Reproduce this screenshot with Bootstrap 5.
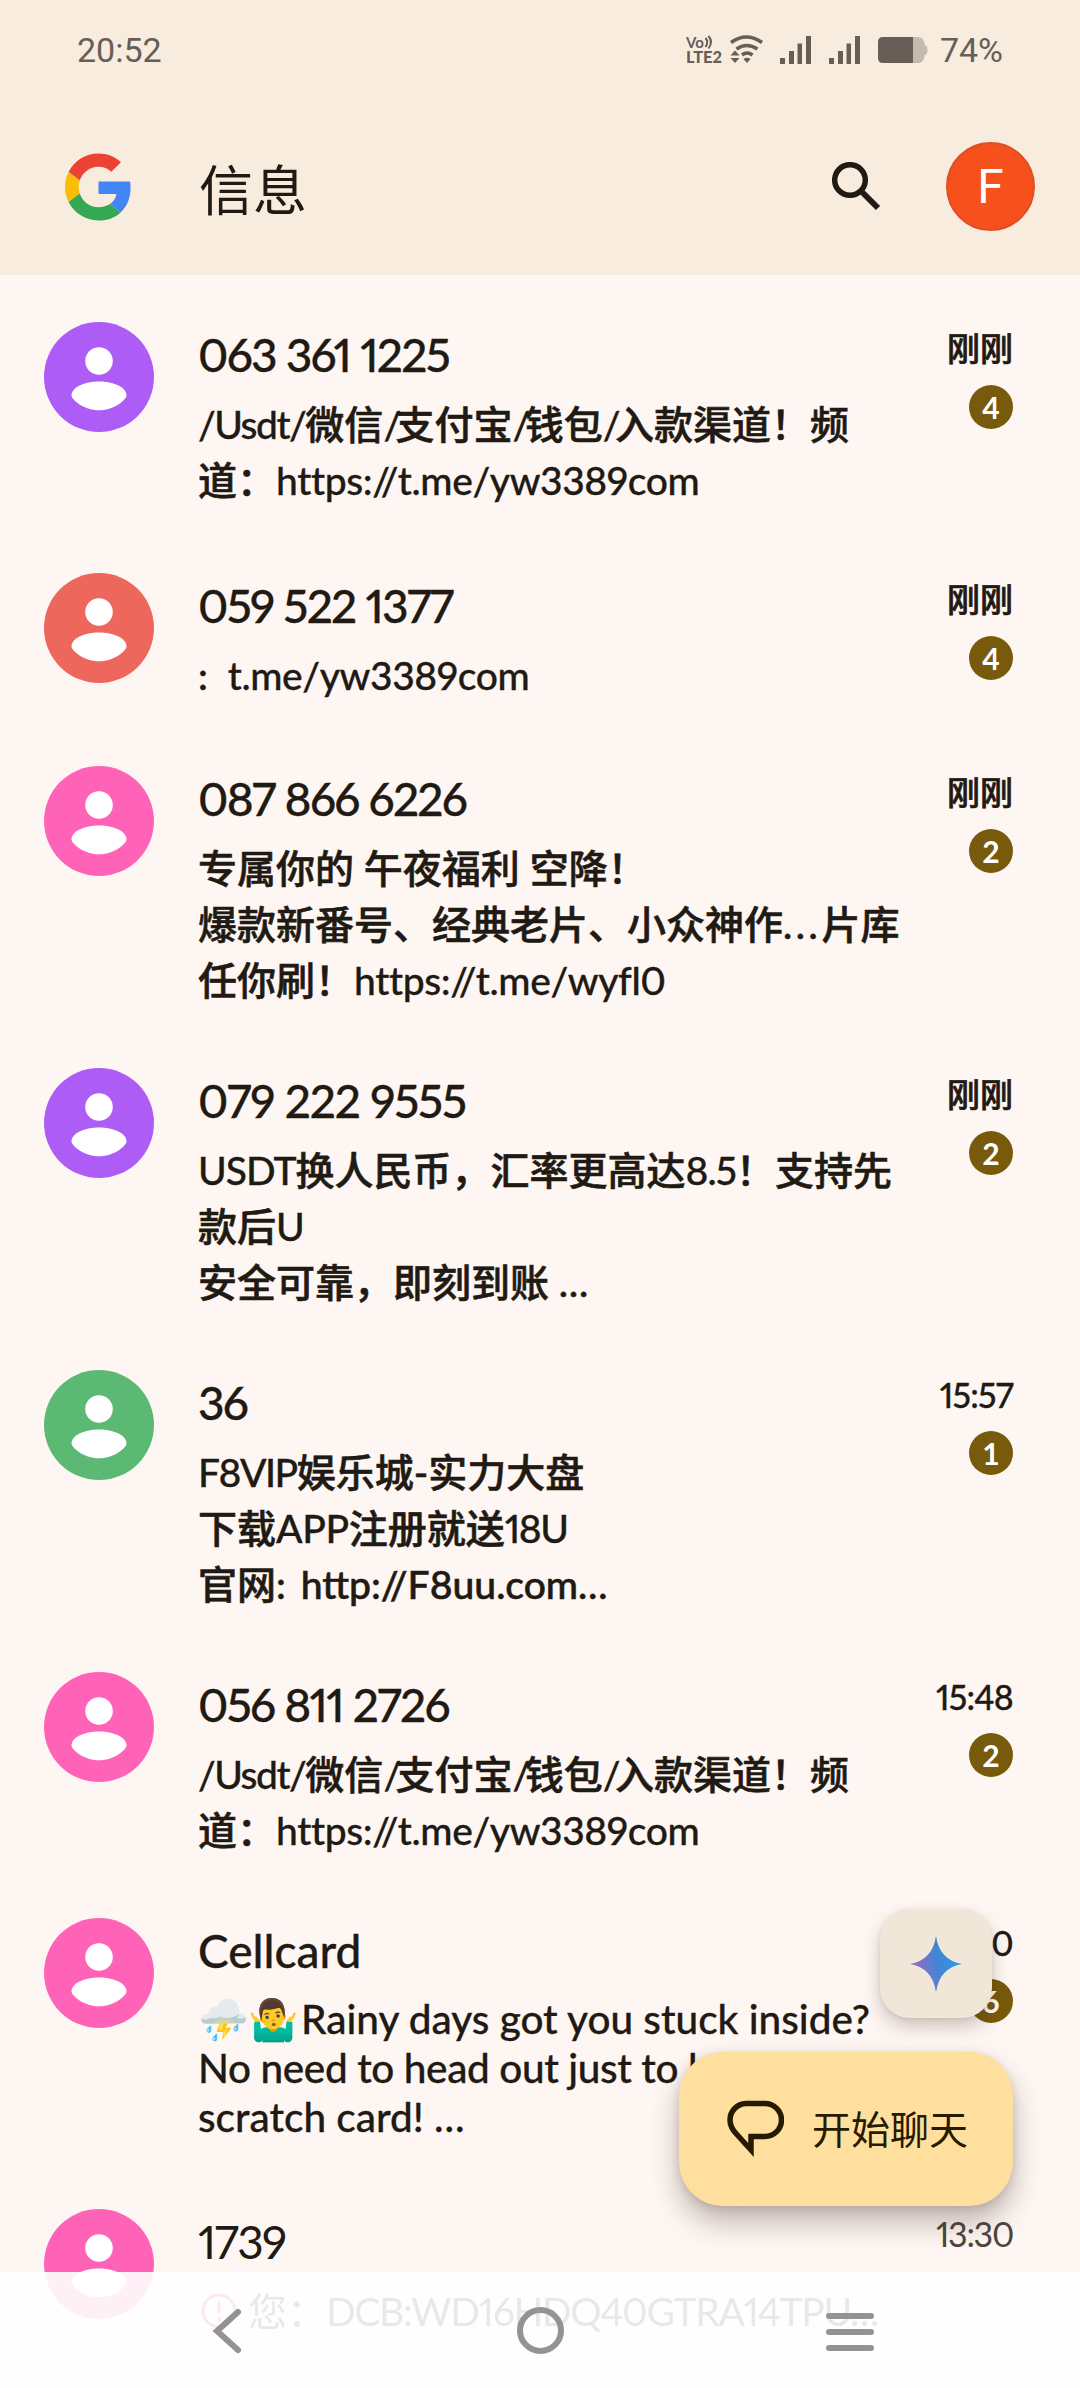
<!DOCTYPE html>
<html lang="zh-CN">
<head>
<meta charset="utf-8">
<meta name="viewport" content="width=device-width, initial-scale=1">
<title>信息</title>
<link href="https://cdn.jsdelivr.net/npm/bootstrap@5.3.0/dist/css/bootstrap.min.css" rel="stylesheet">
<style>
  body { background:#fef6f2; color:#1f1a13; font-family:Lato,"Noto Sans CJK SC",sans-serif; font-feature-settings:"pnum","kern"; }
  .phone { width:1080px; height:2388px; }
  .top-area { height:275px; background:#f8ecdf; }
  .status-bar { height:98px; padding:2px 77px 0; color:#665e57; font:34px/40px Roboto,sans-serif; }
  .signal-b { margin-left:18px; }
  .signal-a { margin-left:14px; }
  .battery { margin:0 12px 0 18px; }
  .app-bar { height:177px; padding:0 45px 0 65px; }
  .app-title { font-size:54px; line-height:70px; margin-left:67px; }
  .lens { margin-right:65px; }
  .account { width:89px; height:89px; background:#f6511d; border:2px solid #dd4f24; font:48px/48px Roboto,sans-serif; }
  .inbox { padding-top:47px; }
  .thread { padding:0 67px 0 44px; }
  .ava { flex:none; }
  .thread-text { margin-left:44px; white-space:nowrap; font-weight:500; -webkit-text-stroke:.6px currentColor; }
  .who { font-size:46px; line-height:66px; -webkit-text-stroke:.3px currentColor; }
  .snip { font-size:39px; line-height:56px; margin-top:8px; }
  .snip.latin { font-size:40.5px; line-height:49px; margin-top:10px; -webkit-text-stroke:.3px currentColor; }
  .when { font-size:34px; line-height:50px; font-weight:500; white-space:nowrap; letter-spacing:-.8px; -webkit-text-stroke:.3px currentColor; }
  .when.zh { font-size:33px; line-height:52px; letter-spacing:0; -webkit-text-stroke:.7px currentColor; }
  .unread { width:44px; height:44px; margin-top:11px; background:#775a0b; color:#fff; font:700 30px/44px Lato,sans-serif; text-align:center; }
  .h1l { height:193px; } .h2l { height:246px; } .h2x { height:251px; } .h3l { height:302px; } .h3e { height:291px; }
  .seen .thread-text, .seen .who, .seen .when { font-weight:400; -webkit-text-stroke:0; }
  .seen .when { color:#4c463e; letter-spacing:-1.3px; }
  /* tracking of the Latin runs */
  .num { letter-spacing:-1.72px; }
  .num-w { letter-spacing:-1.15px; }
  .run { letter-spacing:-.38px; -webkit-text-stroke:.3px currentColor; }
  .run-s { letter-spacing:-1.5px; -webkit-text-stroke:.3px currentColor; }
  .run-m { letter-spacing:-1px; -webkit-text-stroke:.3px currentColor; }
  .sl { letter-spacing:-5.6px; -webkit-text-stroke:.3px currentColor; }
  .dots { letter-spacing:3.6px; }
  .sp { letter-spacing:5px; }
  .code { letter-spacing:-1.31px; }
  .emo { margin-right:3px; -webkit-text-stroke:0; }
  .warn { margin:0 8px 0 2px; }
  .spark-fab { right:88px; top:1909px; width:112px; height:109px; border-radius:30px; background:#f0e7d9; box-shadow:0 9px 18px rgba(60,45,30,.24),0 1px 4px rgba(60,45,30,.1); }
  .chat-fab { right:67px; top:2052px; width:334px; height:154px; border-radius:44px; background:#ffdf9e; color:#261a00; font-size:39px; padding:0 45px 0 48px; box-shadow:0 16px 28px rgba(60,45,40,.32),0 2px 8px rgba(60,45,30,.15); }
  .nav-keys { left:0; right:0; bottom:0; height:116px; background:rgba(255,255,255,.9); }
</style>
<script src="https://cdn.jsdelivr.net/npm/bootstrap@5.3.0/dist/js/bootstrap.bundle.min.js"></script>
</head>
<body>
<svg class="d-none">
  <symbol id="person" viewBox="0 0 110 110"><circle cx="55" cy="55" r="55" fill="currentColor"/><circle cx="55" cy="39" r="13.8" fill="#fff"/><path d="M27.500 73.500C27.500 65 41 59.500 55 59.500S82.500 65 82.500 73.500C82.500 77 71 88.300 55 88.300S27.500 77 27.500 73.500Z" fill="#fff"/></symbol>
  <symbol id="bars" viewBox="0 0 31 28"><path d="M0 22h5v6H0zM9 15h5v13H9zM17.500 7.500h4.500V28h-4.500zM26 0h5v28h-5z" fill="#665e57"/></symbol>
</svg>
<div class="phone position-relative overflow-hidden">
  <header class="top-area">
    <div class="status-bar d-flex align-items-center">
      <span class="me-auto">20:52</span>
      <svg width="80" height="32" viewBox="0 0 80 32" fill="none" stroke="#665e57">
        <text x="0" y="14" font-family="Lato" font-size="15" font-weight="700" fill="#665e57" stroke="none">Vo</text>
        <path d="M19.500 4q3.500 4 0 9M22.500 2q5 6 0 12.500" stroke-width="2"/>
        <text x="0" y="29" font-family="Lato" font-size="16" font-weight="900" fill="#665e57" stroke="none" textLength="36" lengthAdjust="spacingAndGlyphs">LTE2</text>
        <path d="M45 8.500q15.500-11 31 0M50.500 15q10-7 21 0M56 21q5-4 10.500 0" stroke-width="3.600"/>
        <path d="M57.500 25q3.500-2.500 7 0L61 29zM44.500 21.500h9L49 16.500zM44.500 24h9L49 29z" fill="#665e57" stroke="none"/>
      </svg>
      <svg class="signal-a" width="31" height="28"><use href="#bars"/></svg>
      <svg class="signal-b" width="31" height="28"><use href="#bars"/></svg>
      <svg class="battery" width="50" height="26" viewBox="0 0 50 26"><path d="M35 0h5q5 0 6.500 6v2q3 0 3 5t-3 5v2q-1.500 6-6.500 6h-5z" fill="#c5bbac"/><path d="M5 0h30v26H5q-5 0-5-5V5q0-5 5-5z" fill="#665e57"/></svg>
      <span>74%</span>
    </div>
    <div class="app-bar d-flex align-items-center">
      <svg width="67" height="68" viewBox="0 0 48 48"><path fill="#ea4335" d="M24 9.500c3.540 0 6.710 1.220 9.210 3.600l6.850-6.850C35.900 2.380 30.470 0 24 0 14.620 0 6.510 5.380 2.560 13.220l7.980 6.190C12.430 13.720 17.740 9.500 24 9.500z"/><path fill="#4285f4" d="M46.980 24.550c0-1.570-.15-3.090-.38-4.550H24v9.020h12.940c-.58 2.960-2.260 5.480-4.780 7.180l7.730 6c4.510-4.180 7.090-10.360 7.090-17.650z"/><path fill="#fbbc05" d="M10.530 28.590A14.500 14.500 0 0 1 9.770 24c0-1.600.27-3.140.76-4.590l-7.980-6.190A23.900 23.900 0 0 0 0 24c0 3.880.92 7.540 2.560 10.780l7.970-6.190z"/><path fill="#34a853" d="M24 48c6.480 0 11.930-2.130 15.890-5.810l-7.730-6c-2.150 1.450-4.920 2.300-8.160 2.300-6.260 0-11.570-4.220-13.470-9.910l-7.980 6.190C6.510 42.620 14.620 48 24 48z"/></svg>
      <h1 class="app-title mb-0 fw-normal me-auto pt-2">信息</h1>
      <svg class="lens" width="49" height="49" viewBox="0 0 49 49" fill="none" stroke="#1f1a13"><circle cx="18" cy="18" r="15.300" stroke-width="5.500"/><path d="M29 29L46 46" stroke-width="6"/></svg>
      <div class="account rounded-circle text-white d-flex align-items-center justify-content-center">F</div>
    </div>
  </header>

  <main class="inbox">
    <article class="thread h2x d-flex align-items-start">
      <svg class="ava" width="110" height="110" color="#ae5cf6"><use href="#person"/></svg>
      <div class="thread-text me-auto"><div class="who num">063 361 1225</div>
      <div class="snip"><span class="run-s">/Usdt/</span>微信<span class="sl">/</span>支付宝<span class="sl">/</span>钱包<span class="sl">/</span>入款渠道！频<br>道：<span class="run">https://t.me/yw3389com</span></div></div>
      <div class="d-flex flex-column align-items-end"><div class="when zh">刚刚</div><div class="unread rounded-circle">4</div></div>
    </article>
    <article class="thread h1l d-flex align-items-start">
      <svg class="ava" width="110" height="110" color="#ee675c"><use href="#person"/></svg>
      <div class="thread-text me-auto"><div class="who num">059 522 1377</div>
      <div class="snip"><span class="sp">: </span><span class="run">t.me/yw3389com</span></div></div>
      <div class="d-flex flex-column align-items-end"><div class="when zh">刚刚</div><div class="unread rounded-circle">4</div></div>
    </article>
    <article class="thread h3l d-flex align-items-start">
      <svg class="ava" width="110" height="110" color="#ff63b8"><use href="#person"/></svg>
      <div class="thread-text me-auto"><div class="who num">087 866 6226</div>
      <div class="snip">专属你的 午夜福利 空降！<br>爆款新番号、经典老片、小众神作<span class="dots">...</span>片库<br>任你刷！<span class="run">https://t.me/wyfl0</span></div></div>
      <div class="d-flex flex-column align-items-end"><div class="when zh">刚刚</div><div class="unread rounded-circle">2</div></div>
    </article>
    <article class="thread h3l d-flex align-items-start">
      <svg class="ava" width="110" height="110" color="#ae5cf6"><use href="#person"/></svg>
      <div class="thread-text me-auto"><div class="who num-w">079 222 9555</div>
      <div class="snip"><span class="run-m">USDT</span>换人民币，汇率更高达<span class="run-m">8.5</span>！支持先<br>款后<span class="run">U</span><br>安全可靠，即刻到账 …</div></div>
      <div class="d-flex flex-column align-items-end"><div class="when zh">刚刚</div><div class="unread rounded-circle">2</div></div>
    </article>
    <article class="thread h3l d-flex align-items-start">
      <svg class="ava" width="110" height="110" color="#5bb974"><use href="#person"/></svg>
      <div class="thread-text me-auto"><div class="who num">36</div>
      <div class="snip"><span class="run-s">F8VIP</span>娱乐城-实力大盘<br>下载<span class="run">APP</span>注册就送<span class="run-s">18U</span><br>官网<span class="sp">:</span> http://F8uu.com…</div></div>
      <div class="d-flex flex-column align-items-end"><div class="when">15:57</div><div class="unread rounded-circle">1</div></div>
    </article>
    <article class="thread h2l d-flex align-items-start">
      <svg class="ava" width="110" height="110" color="#ff63b8"><use href="#person"/></svg>
      <div class="thread-text me-auto"><div class="who num">056 811 2726</div>
      <div class="snip"><span class="run-s">/Usdt/</span>微信<span class="sl">/</span>支付宝<span class="sl">/</span>钱包<span class="sl">/</span>入款渠道！频<br>道：<span class="run">https://t.me/yw3389com</span></div></div>
      <div class="d-flex flex-column align-items-end"><div class="when">15:48</div><div class="unread rounded-circle">2</div></div>
    </article>
    <article class="thread h3e d-flex align-items-start">
      <svg class="ava" width="110" height="110" color="#ff63b8"><use href="#person"/></svg>
      <div class="thread-text me-auto"><div class="who">Cellcard</div>
      <div class="snip latin"><span class="emo">⛈️🤷‍♂️</span>Rainy days got you stuck inside?<br><span class="run">No need to head out just to buy a</span><br>scratch card! …</div></div>
      <div class="d-flex flex-column align-items-end"><div class="when">15:40</div><div class="unread rounded-circle">6</div></div>
    </article>
    <article class="thread seen d-flex align-items-start">
      <svg class="ava" width="110" height="110" color="#ff63b8"><use href="#person"/></svg>
      <div class="thread-text me-auto"><div class="who num">1739</div>
      <div class="snip d-flex align-items-center"><svg class="warn" width="40" height="40" viewBox="0 0 40 40" fill="none" stroke="#d93025" stroke-width="3"><circle cx="19" cy="20" r="16"/><path d="M19 11v11M19 26v4"/></svg>您：<span class="code">DCB:WD16HDQ40GTRA14TPU…</span></div></div>
      <div class="when">13:30</div>
    </article>
  </main>

  <button class="spark-fab position-absolute border-0 p-0 d-flex align-items-center justify-content-center" aria-label="Gemini">
    <svg width="52" height="56" viewBox="0 0 52 56"><defs><linearGradient id="gem" x1="0" y1=".2" x2="1" y2="0"><stop offset="0" stop-color="#9a6bc4"/><stop offset=".45" stop-color="#4484d6"/><stop offset="1" stop-color="#1fa5e8"/></linearGradient></defs><path d="M26 0Q29.500 24 52 28Q29.500 32 26 56Q22.500 32 0 28Q22.500 24 26 0Z" fill="url(#gem)"/></svg>
  </button>
  <button class="chat-fab position-absolute border-0 d-flex align-items-center justify-content-between">
    <svg width="57" height="58" viewBox="0 0 57 58" fill="none" stroke="#261a00" stroke-width="5.500"><path d="M19 3.500H38A16.500 16.500 0 0 1 38 36.500H24V50L9 33.500Q3 27 3 20A16.500 16.500 0 0 1 19 3.500Z"/></svg>
    <span>开始聊天</span>
  </button>
  <nav class="nav-keys position-absolute">
    <svg width="1080" height="116" fill="none" stroke="#939393" stroke-width="6" stroke-linecap="round"><path d="M238 40L217 59L238 78"/><circle cx="540.500" cy="58.500" r="20.500"/><path d="M829 44h42M829 60h42M829 76h42"/></svg>
  </nav>
</div>
</body>
</html>
